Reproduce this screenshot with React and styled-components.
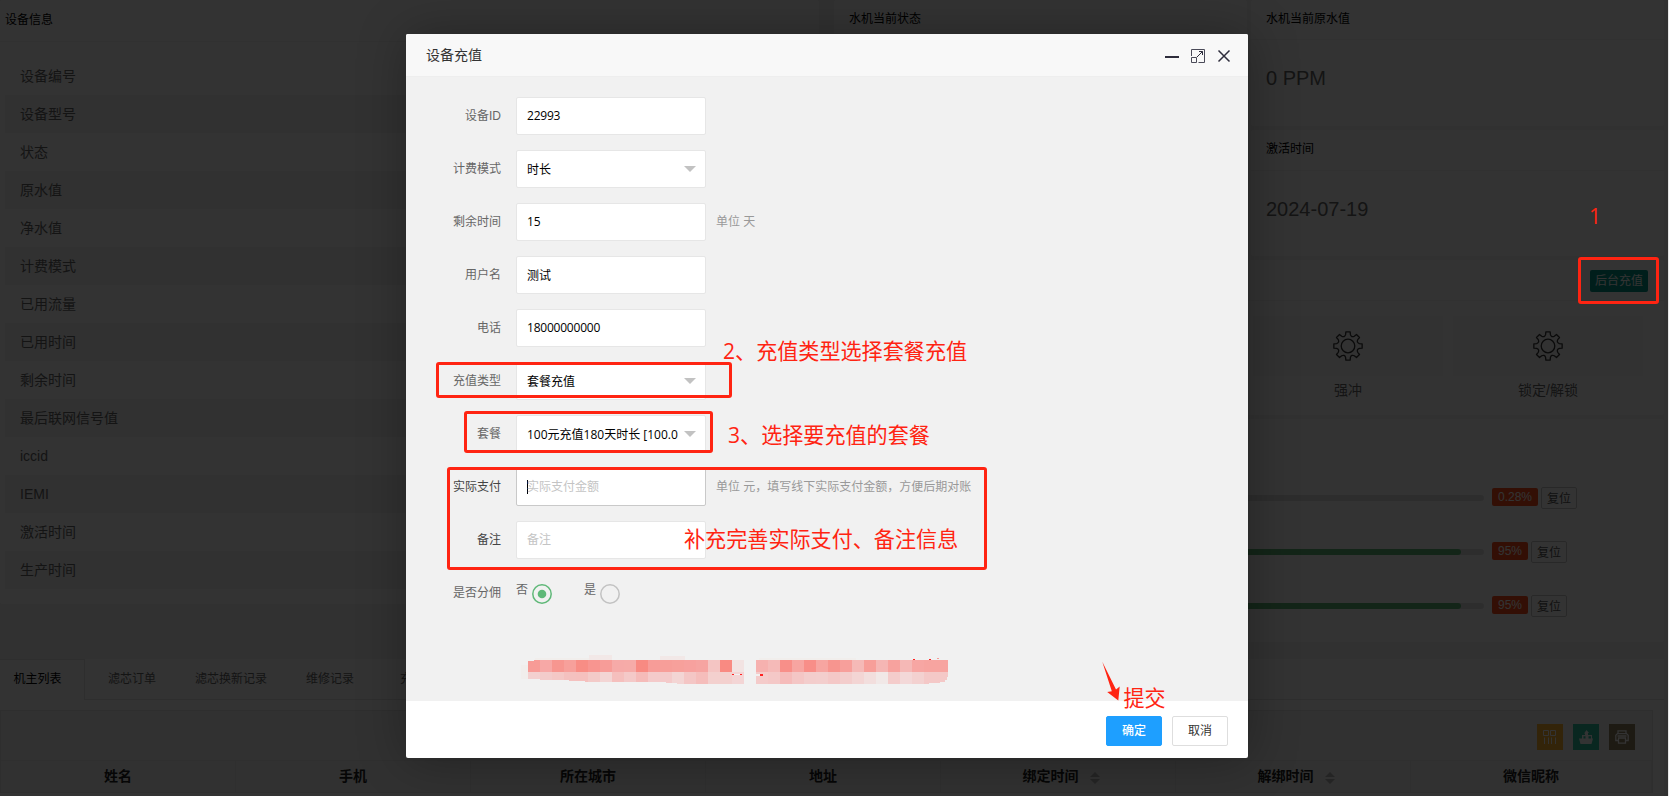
import React from "react";
import styled, { createGlobalStyle } from "styled-components";

const RED = "#ff2412";

const GlobalStyle = createGlobalStyle`
  * { box-sizing: border-box; }
  html, body { margin: 0; padding: 0; overflow: hidden; }
  body {
    width: 1669px;
    height: 796px;
    font: 14px/24px "Liberation Sans", "Noto Sans CJK SC", sans-serif;
    color: #333;
    background: #f2f2f2;
  }
`;

const Screen = styled.div`
  position: relative;
  width: 1669px;
  height: 796px;
  overflow: hidden;
  background: #f2f2f2;
`;

/* ---------- device page ---------- */

const Page = styled.div`
  display: flex;
  flex-direction: column;
  gap: 17px;
  width: 1664px;
`;

const Dashboard = styled.div`
  display: flex;
  gap: 15px;
  height: 642px;
`;

const Card = styled.section`
  background: #fff;
  border-radius: 2px;
  width: ${(p) => (p.$w ? `${p.$w}px` : "auto")};
  height: ${(p) => p.$h}px;
`;

const CardTitle = styled.div`
  display: flex;
  align-items: center;
  justify-content: space-between;
  height: ${(p) => p.$h || 41}px;
  padding: ${(p) => p.$pad || "0 16px 2px 15px"};
  font-size: 12px;
  color: #000;
  border-bottom: 1px solid #f6f6f6;
`;

const InfoRows = styled.div`
  margin: 15px 5px 0;
`;

const InfoRow = styled.div`
  height: 38px;
  padding: 0 15px;
  line-height: 38px;
  color: #666;
  &:nth-child(even) { background: #f2f2f2; }
`;

const RightArea = styled.div`
  display: flex;
  flex-direction: column;
  gap: 4px;
  width: 830px;
`;

const StatRow = styled.div`
  display: flex;
  gap: 4px;
`;

const StatColumn = styled.div`
  display: flex;
  flex-direction: column;
  gap: 4px;
  width: 413px;
`;

const StatValue = styled.div`
  padding: 26px 15px 0;
  font-size: 20px;
  color: #666;
`;

const RechargeButton = styled.button`
  width: 58px;
  height: 22px;
  margin-top: 3px;
  padding: 0;
  border: 0;
  border-radius: 2px;
  font: inherit;
  line-height: 22px;
  color: #fff;
  background: #009688;
`;

const ControlGrid = styled.div`
  display: flex;
  justify-content: flex-end;
  gap: 10px;
  padding: 15px 21px 0 0;
`;

const Control = styled.div`
  width: 190px;
  text-align: center;
  color: #666;
`;

const ControlTile = styled.div`
  display: flex;
  align-items: center;
  justify-content: center;
  height: 60px;
  margin-bottom: 2px;
  background: #f8f8f8;
`;

const FilterList = styled.div`
  display: flex;
  flex-direction: column;
  gap: 32px;
  padding: 68px 0 0 19px;
`;

const FilterRow = styled.div`
  display: flex;
  align-items: center;
  height: 22px;
`;

const Track = styled.div`
  width: 631px;
  height: 6px;
  margin-right: 8px;
  border-radius: 3px;
  background: #e2e2e2;
`;

const Fill = styled.div`
  width: ${(p) => p.$w}px;
  height: 6px;
  border-radius: 3px;
  background: #5fb878;
`;

const Badge = styled.span`
  height: 18px;
  margin: -2px 3px 0 0;
  padding: 0 6px;
  border-radius: 2px;
  font-size: 12px;
  line-height: 18px;
  color: #fff;
  background: #ff4e1c;
`;

const ResetButton = styled.button`
  width: 36px;
  height: 22px;
  padding: 1px 0 0;
  border: 1px solid #c9c9c9;
  border-radius: 2px;
  font: inherit;
  font-size: 12px;
  line-height: 20px;
  color: #555;
  background: #fff;
`;

const RecordCard = styled.section`
  height: 137px;
  background: #fff;
`;

const Tabs = styled.div`
  display: flex;
  height: 41px;
  border-bottom: 1px solid #e6e6e6;
`;

const Tab = styled.div`
  width: ${(p) => p.$w}px;
  height: 41px;
  margin-left: ${(p) => (p.$active ? "-9px" : 0)};
  text-align: center;
  font-size: 12px;
  line-height: ${(p) => (p.$active ? "38px" : "40px")};
  color: ${(p) => (p.$active ? "#000" : "#666")};
  background: #fff;
  border: solid #e6e6e6;
  border-width: ${(p) => (p.$active ? "1px 1px 0 0" : "0 0 1px 0")};
`;

const RecordTable = styled.div`
  width: 1653px;
  margin-top: 10px;
  border: 1px solid #e6e6e6;
  border-bottom: 0;
`;

const TableTools = styled.div`
  display: flex;
  justify-content: flex-end;
  gap: 10px;
  height: 50px;
  padding: 13px 17px 0 0;
  background: #f2f2f2;
  border-bottom: 1px solid #ebebeb;
`;

const Tool = styled.div`
  display: flex;
  align-items: center;
  justify-content: center;
  width: 26px;
  height: 26px;
  background: ${(p) => p.$bg};
`;

const TableHead = styled.div`
  display: grid;
  grid-template-columns: repeat(6, 235px) 1fr;
  height: 32px;
  background: #f2f2f2;
  border-bottom: 1px solid #e9e9e9;
`;

const HeadCell = styled.div`
  display: flex;
  align-items: center;
  justify-content: center;
  gap: 11px;
  padding: 0 0 2px ${(p) => (p.$sort ? 6 : 0)}px;
  font-weight: 700;
  color: #222;
  border-right: 1px solid #ebebeb;
  & > svg { margin-top: 3px; }
`;

const EdgeStrip = styled.div`
  position: absolute;
  top: 0;
  right: 0;
  width: 1px;
  height: 796px;
  background: #e8e8e8;
`;

/* ---------- dialog ---------- */

const Shade = styled.div`
  position: absolute;
  inset: 0;
  background: rgba(0, 0, 0, 0.8);
`;

const Dialog = styled.div`
  position: absolute;
  left: 406px;
  top: 34px;
  display: flex;
  flex-direction: column;
  width: 842px;
  height: 724px;
  border-radius: 2px;
  background: #fff;
  box-shadow: 1px 1px 50px rgba(0, 0, 0, 0.3);
`;

const DialogHeader = styled.header`
  display: flex;
  align-items: center;
  justify-content: space-between;
  height: 43px;
  padding: 0 17px 0 20px;
  color: #333;
  background: #f8f8f8;
  border-bottom: 1px solid #eee;
  border-radius: 2px 2px 0 0;
`;

const WindowButtons = styled.div`
  display: flex;
  align-items: center;
  gap: 12px;
  margin-top: 1px;
`;

const DialogBody = styled.div`
  flex: 1;
  padding-top: 20px;
  background: #f1f1f1;
`;

const DialogFooter = styled.footer`
  display: flex;
  justify-content: flex-end;
  gap: 10px;
  height: 57px;
  padding: 15px 20px 0;
`;

const FootButton = styled.button`
  width: 56px;
  height: 30px;
  padding: 0;
  border: 1px solid ${(p) => (p.$primary ? "#1e9fff" : "#dedede")};
  border-radius: 2px;
  font: inherit;
  font-size: 12px;
  line-height: 28px;
  font-weight: ${(p) => (p.$primary ? 500 : 400)};
  color: ${(p) => (p.$primary ? "#fff" : "#333")};
  background: ${(p) => (p.$primary ? "#1e9fff" : "#fff")};
`;

const FormItem = styled.div`
  display: flex;
  height: 38px;
  margin-bottom: 15px;
  font-size: 12px;
`;

const Label = styled.label`
  width: 110px;
  padding: 9px 15px;
  line-height: 20px;
  text-align: right;
  color: ${(p) => (p.$dark ? "#444" : "#666")};
`;

const Field = styled.div`
  display: flex;
  align-items: center;
  width: 190px;
  height: 38px;
  padding: ${(p) => (p.$low ? "1px" : 0)} 9px 0 10px;
  border: 1px solid ${(p) => (p.$focus ? "#c9c9c9" : "#e6e6e6")};
  border-radius: 2px;
  font-family: "Open Sans", "Noto Sans CJK SC", sans-serif;
  line-height: 20px;
  letter-spacing: ${(p) => (p.$latin ? "-0.22px" : 0)};
  white-space: nowrap;
  color: ${(p) => (p.$hint ? "#c4c4c4" : "#000")};
  background: #fff;
`;

const Caret = styled.i`
  width: 0;
  height: 0;
  margin: -1px 0 0 auto;
  border: 6px solid transparent;
  border-top-color: #c2c2c2;
  border-bottom-width: 0;
`;

const Cursor = styled.i`
  width: 1px;
  height: 14px;
  margin-right: -1px;
  background: #000;
`;

const Hint = styled.span`
  padding: 9px 0 0 10px;
  line-height: 20px;
  color: #999;
`;

const RadioGroup = styled.div`
  display: flex;
  gap: 32px;
  color: #666;
`;

const Radio = styled.div`
  display: flex;
  align-items: center;
  gap: 4px;
  line-height: 32px;
  & > span { height: 38px; }
  & > svg { margin-top: 2px; }
`;

const Mosaic = styled.svg`
  display: block;
  margin: 43px 0 0 115px;
`;

/* ---------- red marks over the page ---------- */

const Mark = styled.div`
  position: absolute;
  left: ${(p) => p.$x}px;
  top: ${(p) => p.$y}px;
  width: ${(p) => p.$w}px;
  height: ${(p) => p.$h}px;
  border: 3px solid ${RED};
  border-radius: 3px;
`;

const Note = styled.div`
  position: absolute;
  left: ${(p) => p.$x}px;
  top: ${(p) => p.$y}px;
  font-family: "Open Sans", "Noto Sans CJK SC", sans-serif;
  font-size: 21.1px;
  line-height: 30px;
  white-space: nowrap;
  color: ${RED};
`;

const ArrowMark = styled.svg`
  position: absolute;
  left: 1100px;
  top: 660px;
`;

/* ---------- drawings ---------- */

const GEAR = (() => {
  const at = (a, r) => `${(15 + r * Math.cos(a)).toFixed(2)} ${(15 + r * Math.sin(a)).toFixed(2)}`;
  let d = "";
  for (let i = 0; i < 8; i++) {
    const a = (i * Math.PI) / 4 - Math.PI / 2;
    const valley = a + Math.PI / 8;
    d += `${i ? "L" : "M"}${at(a - 0.21, 11.6)}L${at(a - 0.15, 14.3)}L${at(a + 0.15, 14.3)}L${at(a + 0.21, 11.6)}`;
    d += `Q${at(valley, 9)} ${at(a + Math.PI / 4 - 0.21, 11.6)}`;
  }
  return `${d}Z`;
})();

const GearIcon = () => (
  <svg width="30" height="30" viewBox="0 0 30 30" fill="none" stroke="#333" strokeWidth="1.3" strokeLinejoin="round">
    <path d={GEAR} />
    <circle cx="15" cy="15" r="6.8" />
  </svg>
);

const SortIcon = () => (
  <svg width="10" height="13" viewBox="0 0 10 13" fill="#b2b2b2">
    <path d="M5 1L10 6H0Z M5 13L10 8H0Z" />
  </svg>
);

const ColumnsIcon = () => (
  <svg width="14" height="14" viewBox="0 0 14 14" fill="none" stroke="#fff" strokeWidth="1">
    <path d="M.5 .5h5v5h-5z M7.500 .5h5v5h-5z M1.500 7.500V14 M5.500 7.500V14 M8.500 7.500V14 M12.500 7.500V14" />
  </svg>
);

const ExportIcon = () => (
  <svg width="14" height="14" viewBox="0 0 14 14">
    <path d="M0 8.500h3V5h3V3.500H5L7.500 0 10 3h-1v2h4v3.500h1L12.500 14h-11z" fill="#fff" />
    <path d="M4.500 6.200h2v2.300h-2z M9.500 6.200H12v2.300H9.500z" fill="#2ec2a0" />
  </svg>
);

const PrintIcon = () => (
  <svg width="14" height="14" viewBox="0 0 14 14" fill="none" stroke="#fff" strokeWidth="1.3">
    <path d="M3 3.500V.8h8v2.700 M3 10.500H.8V5.200L2.500 3.600h9l1.700 1.600v5.300H11 M3.500 8h7v5.200h-7z M2.500 6h9" />
  </svg>
);

const MinIcon = () => (
  <svg width="14" height="14"><path d="M0 7h14v2H0z" fill="#2e2d3c" /></svg>
);

const MaxIcon = () => (
  <svg width="14" height="14" fill="none" stroke="#4a4a58" strokeWidth="1">
    <path d="M.5 7V.5h13v13H7.500 M.5 8.500h5v5h-5z" />
    <path d="M6 8l5.500-5.500 M8 2.500h3.500V6" stroke="#2e2d3c" />
  </svg>
);

const CloseIcon = () => (
  <svg width="14" height="14" fill="none" stroke="#2e2d3c" strokeWidth="1.5">
    <path d="M1.500 1.500l11 11 M12.500 1.500l-11 11" />
  </svg>
);

const RadioIcon = ({ on }) => (
  <svg width="20" height="20" fill="none">
    <circle cx="10" cy="10" r="9.200" stroke={on ? "#5fb878" : "#c2c2c2"} strokeWidth="1.500" />
    {on && <circle cx="10" cy="10" r="4.300" fill="#5fb878" />}
  </svg>
);

const MOSAIC = [
  [528, 660, ["f79b96", "f7a8a6", "f79690", "f7a09b", "f88d85", "f89590", "f79c98", "f6aaa8", "f6aba8", "f88a82", "f79c98", "f79e99", "f7a09b", "f7a19e", "f6a4a1", "f4c5c3", "f98a82", "f2e3e2"]],
  [528, 672, ["f3d0cf", "f3cccb", "f4c8c6", "f4c1bf", "f5c0be", "f3cac8", "f3d5d4", "f5bfbd", "f4c9c8", "f5bbb9", "f4caca", "f4caca", "f3d5d4", "f4c6c5", "f5bdbb", "f3d0ce", "f3d0ce", "f3d5d5"]],
  [756, 660, ["f6b1af", "f5bab8", "f88f89", "f7a5a1", "f88e88", "f7a5a1", "f7958f", "f79f9b", "f5b9b7", "f79e99", "f5b6b4", "f7a29e", "f5b8b6", "f7a6a3", "f7a4a0", "f7a4a0"]],
  [756, 672, ["f4cbca", "f4c8c7", "f5bbba", "f4c6c5", "f3cdcc", "f3cecd", "f4c8c7", "f3cdcc", "f3d5d4", "f2dedd", "f1e8e7", "f4cccb", "f3d8d8", "f3d1d0", "f4c8c7", "f4c8c7"]],
];

const MosaicDrawing = () => (
  <Mosaic width="430" height="32" viewBox="521 655 430 32" shapeRendering="crispEdges">
    <path d="M521 665h7v14h-7z M535 658h54v2h-54z M759 658h97v2h-97z" fill="#f1eeec" />
    <path d="M589 655h23v5h-23z M660 656h25v4h-25z" fill="#f2e8e7" />
    {MOSAIC.map(([x, y, cells]) =>
      cells.map((c, i) => <rect key={`${x}-${y}-${i}`} x={x + i * 12} y={y} width="12" height="12" fill={`#${c}`} />)
    )}
    <path
      fill="#f1f1f1"
      d="M528 660h6v1h-6z M528 684v-5h12v1h29v1h16v1h81v1h11v1z M948 677v7h-19v-1h11v-1h5v-2h2v-3z M732 674h10v1h-10z M756 674h7v2h-7z"
    />
    <path fill="#f22" d="M732 674h2v1h-2z M740 674h2v1h-2z M760 674h3v2h-3z M913 659h2v1h-2z M929 659h2v1h-2z" />
    <path fill="#f79c98" d="M937 658h2v1h-2z" />
  </Mosaic>
);

/* ---------- content ---------- */

const INFO = ["设备编号", "设备型号", "状态", "原水值", "净水值", "计费模式", "已用流量", "已用时间", "剩余时间", "最后联网信号值", "iccid", "IEMI", "激活时间", "生产时间"];
const FILTERS = [["0.28%", 2], ["95%", 608], ["95%", 608]];
const TABS = [["机主列表", 94], ["滤芯订单", 94], ["滤芯换新记录", 104], ["维修记录", 94], ["充值记录", 94]];
const COLUMNS = [["姓名"], ["手机"], ["所在城市"], ["地址"], ["绑定时间", true], ["解绑时间", true], ["微信昵称"]];
const FIELDS = [
  { label: "设备ID", value: "22993", latin: true },
  { label: "计费模式", value: "时长", select: true },
  { label: "剩余时间", value: "15", latin: true, hint: "单位 天" },
  { label: "用户名", value: "测试", low: true },
  { label: "电话", value: "18000000000", latin: true },
  { label: "充值类型", value: "套餐充值", select: true },
  { label: "套餐", value: "100元充值180天时长 [100.0", select: true },
  { label: "实际支付", placeholder: "实际支付金额", focus: true, dark: true, hint: "单位 元，填写线下实际支付金额，方便后期对账" },
  { label: "备注", placeholder: "备注", dark: true },
];

export default function App() {
  return (
    <Screen>
      <GlobalStyle />
      <Page>
        <Dashboard>
          <Card $w={819} $h={604}>
            <CardTitle $h={42} $pad="0 5px 2px">设备信息</CardTitle>
            <InfoRows>
              {INFO.map((t) => <InfoRow key={t}>{t}</InfoRow>)}
            </InfoRows>
          </Card>
          <RightArea>
            <StatRow>
              <StatColumn>
                <Card $h={256}><CardTitle $h={40}>水机当前状态</CardTitle></Card>
              </StatColumn>
              <StatColumn>
                <Card $h={126}>
                  <CardTitle $h={40}>水机当前原水值</CardTitle>
                  <StatValue>0 PPM</StatValue>
                </Card>
                <Card $h={126}>
                  <CardTitle>激活时间</CardTitle>
                  <StatValue>2024-07-19</StatValue>
                </Card>
              </StatColumn>
            </StatRow>
            <Card $h={155}>
              <CardTitle><span /><RechargeButton>后台充值</RechargeButton></CardTitle>
              <ControlGrid>
                {["强冲", "锁定/解锁"].map((t) => (
                  <Control key={t}><ControlTile><GearIcon /></ControlTile>{t}</Control>
                ))}
              </ControlGrid>
            </Card>
            <Card $h={223}>
              <FilterList>
                {FILTERS.map(([t, w], i) => (
                  <FilterRow key={i}>
                    <Track><Fill $w={w} /></Track>
                    <Badge>{t}</Badge>
                    <ResetButton>复位</ResetButton>
                  </FilterRow>
                ))}
              </FilterList>
            </Card>
          </RightArea>
        </Dashboard>
        <RecordCard>
          <Tabs>
            {TABS.map(([t, w], i) => <Tab key={t} $w={w} $active={i === 0}>{t}</Tab>)}
          </Tabs>
          <RecordTable>
            <TableTools>
              <Tool $bg="#ffb52e"><ColumnsIcon /></Tool>
              <Tool $bg="#2ec2a0"><ExportIcon /></Tool>
              <Tool $bg="#8f8060"><PrintIcon /></Tool>
            </TableTools>
            <TableHead>
              {COLUMNS.map(([t, sort]) => <HeadCell key={t} $sort={sort}>{t}{sort && <SortIcon />}</HeadCell>)}
            </TableHead>
          </RecordTable>
        </RecordCard>
      </Page>
      <Shade />
      <EdgeStrip />

      <Dialog>
        <DialogHeader>
          设备充值
          <WindowButtons><MinIcon /><MaxIcon /><CloseIcon /></WindowButtons>
        </DialogHeader>
        <DialogBody>
          {FIELDS.map((f) => (
            <FormItem key={f.label}>
              <Label $dark={f.dark}>{f.label}</Label>
              <Field $low={f.select || f.low} $focus={f.focus} $latin={f.latin} $hint={!!f.placeholder}>
                {f.focus && <Cursor />}
                {f.value || f.placeholder}
                {f.select && <Caret />}
              </Field>
              {f.hint && <Hint>{f.hint}</Hint>}
            </FormItem>
          ))}
          <FormItem>
            <Label>是否分佣</Label>
            <RadioGroup>
              <Radio><span>否</span><RadioIcon on /></Radio>
              <Radio><span>是</span><RadioIcon /></Radio>
            </RadioGroup>
          </FormItem>
          <MosaicDrawing />
        </DialogBody>
        <DialogFooter>
          <FootButton $primary>确定</FootButton>
          <FootButton>取消</FootButton>
        </DialogFooter>
      </Dialog>

      <Mark $x={1578} $y={257} $w={81} $h={47} />
      <Mark $x={436} $y={362} $w={296} $h={36} />
      <Mark $x={464} $y={411} $w={249} $h={42} />
      <Mark $x={447} $y={467} $w={540} $h={103} />
      <Note $x={1589} $y={201}>1</Note>
      <Note $x={723} $y={336}>2、充值类型选择套餐充值</Note>
      <Note $x={728} $y={420}>3、选择要充值的套餐</Note>
      <Note $x={684} $y={524}>补充完善实际支付、备注信息</Note>
      <Note $x={1123.5} $y={683}>提交</Note>
      <ArrowMark width="22" height="44" viewBox="1100 660 22 44">
        <path d="M1102.300 661.700L1116 689.500 1119.700 686.500 1118.300 700.500 1107.200 692 1111.800 691.300Z" fill={RED} />
      </ArrowMark>
    </Screen>
  );
}
